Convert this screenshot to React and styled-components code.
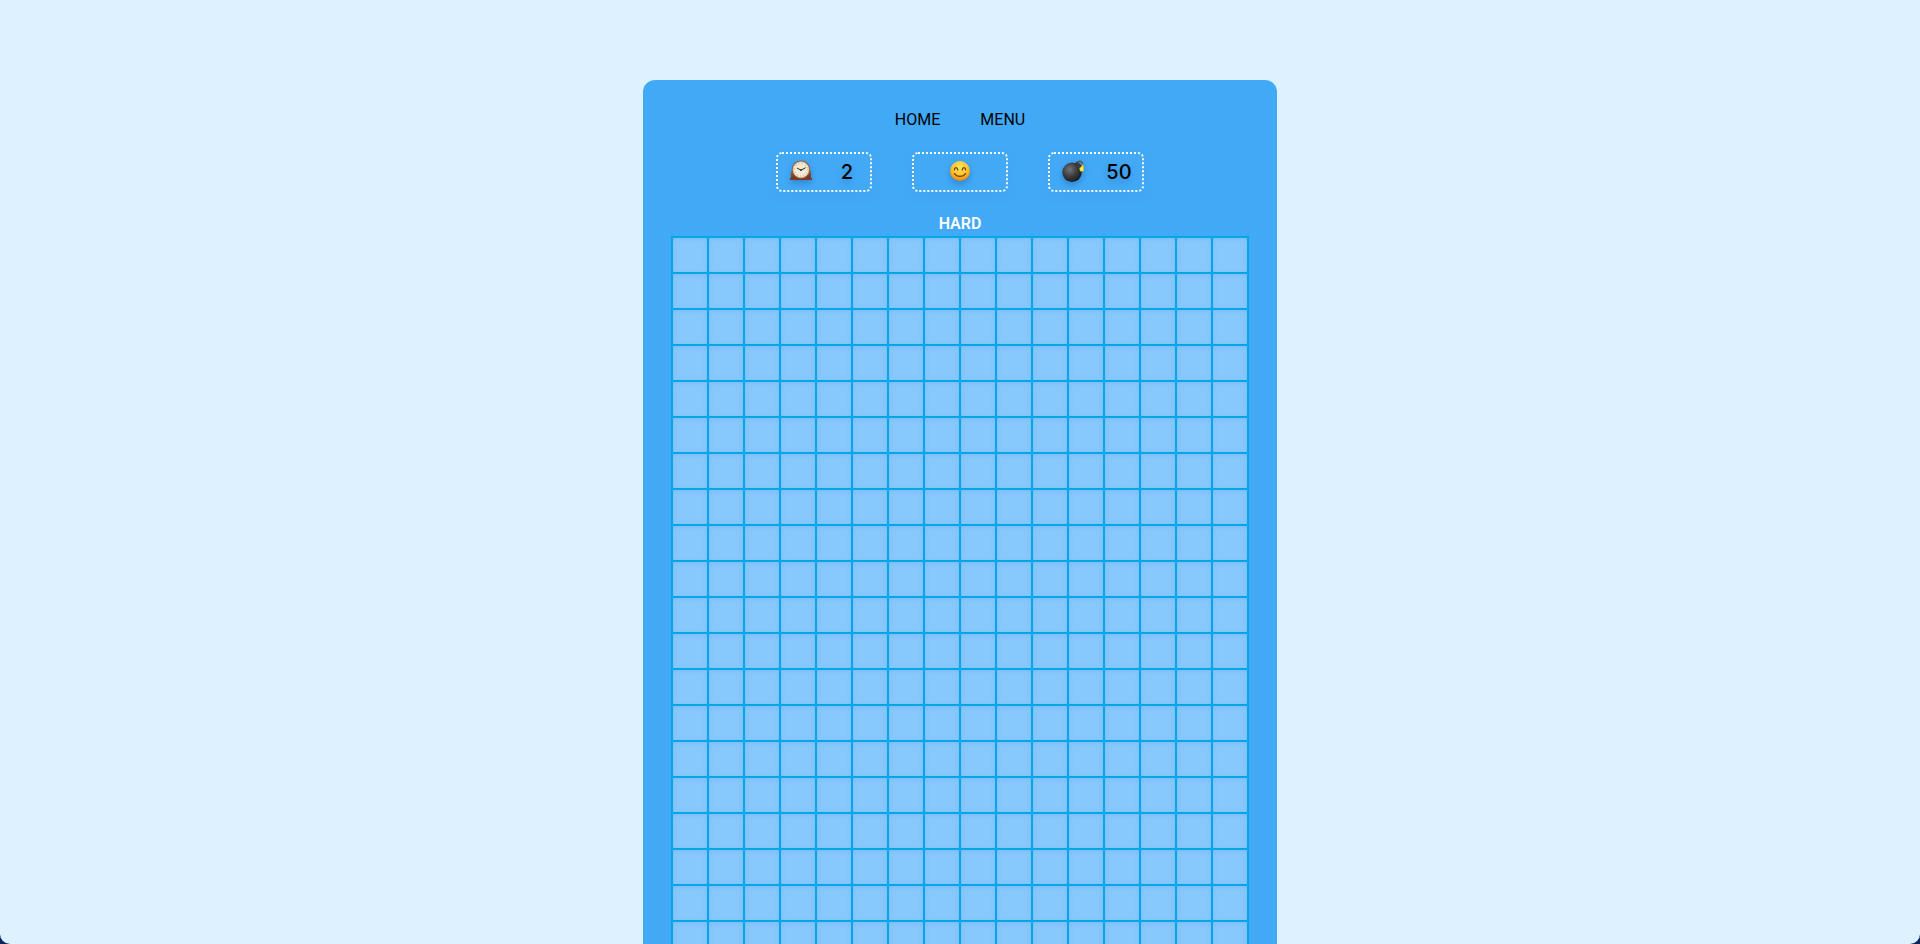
import React, { useState } from "react";
import styled, { createGlobalStyle } from "styled-components";

const COLUMNS = 16;
const ROWS = 24;

const GlobalStyle = createGlobalStyle`
  *, *::before, *::after { box-sizing: border-box; }
  body {
    margin: 0;
    background: #0a2463;
    font-family: Roboto, "Liberation Sans", sans-serif;
    color: #000;
  }
`;

const Page = styled.div`
  display: flex;
  flex-direction: column;
  align-items: center;
  height: 100vh;
  padding: 80px 16px 0;
  overflow: auto;
  scrollbar-width: none;
  background: #ddf1ff;
  border-radius: 0 0 10px 10px;
`;

const Card = styled.main`
  display: flex;
  flex-direction: column;
  align-items: center;
  flex-shrink: 0;
  padding: 28px;
  background: #42a9f7;
  border-radius: 12px;
`;

const Nav = styled.nav`
  display: flex;
  gap: 40px;
`;

const NavLink = styled.a`
  color: inherit;
  font-size: 16px;
  line-height: 24px;
  text-decoration: none;
`;

const Stats = styled.div`
  display: flex;
  gap: 40px;
  margin: 20px 0;
`;

const Stat = styled.div`
  display: grid;
  grid-template-columns: repeat(${(p) => p.$columns || 2}, 1fr);
  place-items: center;
  width: 96px;
  height: 40px;
  padding: 0;
  border: 2px dotted #fff;
  border-radius: 6px;
  background: transparent;
  box-shadow: 0 4px 8px rgba(66, 140, 220, 0.18);
`;

const Value = styled.span`
  font-family: Inter, sans-serif;
  font-size: 20px;
  font-weight: 500;
  line-height: 24px;
  text-shadow: 0 4px 6px rgba(0, 60, 130, 0.25);
`;

const Icon = styled.svg`
  display: block;
  width: 24px;
  height: 24px;
  filter: drop-shadow(0 3px 3px rgba(0, 50, 110, 0.3));
`;

const Level = styled.h1`
  margin: 0;
  color: #fff;
  font-size: 16px;
  font-weight: 600;
  line-height: 24px;
`;

const Board = styled.div`
  display: grid;
  grid-template-columns: repeat(${COLUMNS}, 34px);
  grid-auto-rows: 34px;
  gap: 2px;
  padding: 2px;
  background: #00a8e8;
`;

const Cell = styled.button`
  padding: 0;
  border: 0;
  border-radius: 1px;
  background: ${(p) => (p.$open ? "#c4e4ff" : "#87c8fd")};
  box-shadow: inset 0 1px 5px rgba(80, 130, 190, 0.16);
  cursor: pointer;
`;

function ClockIcon() {
  return (
    <Icon viewBox="0 0 24 24" aria-label="Time" role="img">
      <defs>
        <linearGradient id="wood" x1="0" y1="0" x2="0" y2="1">
          <stop offset="0" stopColor="#a05a3c" />
          <stop offset="1" stopColor="#6e3020" />
        </linearGradient>
      </defs>
      <path d="M2 19v-5.5C2 11.500 2.500 11 4 10.500h16c1.500.5 2 1 2 3V19z" fill="url(#wood)" />
      <path d="M1 18h22v2H1z" fill="#7c3a26" />
      <circle cx="12" cy="9.700" r="9.200" fill="#8d4e32" />
      <circle cx="12" cy="9.700" r="8" fill="#f3ead6" stroke="#d8b98b" strokeWidth=".8" />
      <circle cx="12" cy="9.700" r="6.400" fill="none" stroke="#8b8479" strokeWidth="1" strokeDasharray=".6 2.750" />
      <path d="M8 8l4 2.200 4.600-2.500" fill="none" stroke="#292522" strokeWidth="1" />
      <circle cx="12" cy="10.100" r=".9" fill="#292522" />
    </Icon>
  );
}

function SmileIcon() {
  return (
    <Icon viewBox="0 0 24 24" aria-hidden="true">
      <defs>
        <radialGradient id="face" cx=".5" cy=".3" r=".72">
          <stop offset="0" stopColor="#ffe45c" />
          <stop offset=".55" stopColor="#fdc52c" />
          <stop offset="1" stopColor="#ea8212" />
        </radialGradient>
      </defs>
      <circle cx="12" cy="11" r="10" fill="url(#face)" />
      <path d="M6.300 9.800c.5-3 3-3 3.500 0M14.200 9.800c.5-3 3-3 3.500 0M6.500 13.500c2.500 3.900 8.500 3.900 11 0" fill="none" stroke="#764011" strokeWidth="1.300" strokeLinecap="round" />
    </Icon>
  );
}

function BombIcon() {
  return (
    <Icon viewBox="0 0 24 24" aria-label="Bombs" role="img">
      <defs>
        <radialGradient id="bomb" cx=".38" cy=".35" r=".65">
          <stop offset="0" stopColor="#737578" />
          <stop offset=".5" stopColor="#414346" />
          <stop offset="1" stopColor="#1b1d20" />
        </radialGradient>
      </defs>
      <circle cx="11" cy="12.300" r="9.700" fill="url(#bomb)" />
      <path d="M13.300 4l2.600-2.800 5.400 4.500-2.400 3.600z" fill="#3a3b3e" />
      <path d="M16.500 2.800c1.500-2.600 4.700-2 5.200 2" fill="none" stroke="#57504a" strokeWidth="1.400" />
      <path d="M21.300 3.800l.6 2.200.9.800-.3 1.600.5 2.300-2 .5-2 .3-.3-2-.3-1.500 1.700-.9z" fill="#f9d616" />
      <circle cx="20.800" cy="8.500" r="1.200" fill="#fff47a" />
    </Icon>
  );
}

export default function App() {
  const [opened, setOpened] = useState(() => new Set());
  const open = (index) => setOpened((previous) => new Set(previous).add(index));

  return (
    <>
      <GlobalStyle />
      <Page>
        <Card>
          <Nav>
            <NavLink href="#home">HOME</NavLink>
            <NavLink href="#menu">MENU</NavLink>
          </Nav>
          <Stats>
            <Stat>
              <ClockIcon />
              <Value>2</Value>
            </Stat>
            <Stat as="button" type="button" $columns={1} aria-label="Restart" onClick={() => setOpened(new Set())}>
              <SmileIcon />
            </Stat>
            <Stat>
              <BombIcon />
              <Value>50</Value>
            </Stat>
          </Stats>
          <Level>HARD</Level>
          <Board>
            {Array.from({ length: COLUMNS * ROWS }, (_, index) => (
              <Cell
                key={index}
                type="button"
                aria-label={`Row ${Math.floor(index / COLUMNS) + 1}, column ${(index % COLUMNS) + 1}`}
                $open={opened.has(index)}
                onClick={() => open(index)}
              />
            ))}
          </Board>
        </Card>
      </Page>
    </>
  );
}
